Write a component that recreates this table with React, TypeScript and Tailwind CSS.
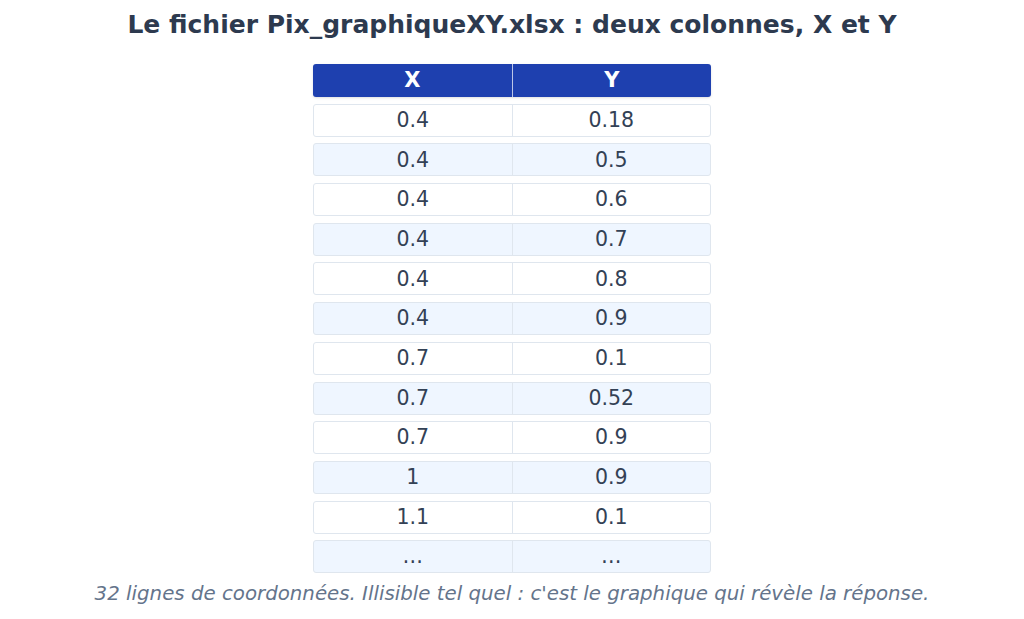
const rows: [string, string][] = [
  ["0.4", "0.18"],
  ["0.4", "0.5"],
  ["0.4", "0.6"],
  ["0.4", "0.7"],
  ["0.4", "0.8"],
  ["0.4", "0.9"],
  ["0.7", "0.1"],
  ["0.7", "0.52"],
  ["0.7", "0.9"],
  ["1", "0.9"],
  ["1.1", "0.1"],
  ["…", "…"],
];

export default function App() {
  return (
    <div
      className="w-[1024px] h-[619px] bg-white flex flex-col items-center text-[#334155]"
      style={{ fontFamily: '"DejaVu Sans", sans-serif' }}
    >
      <h1 className="mt-[10px] text-[25px] leading-[30px] font-bold text-[#2d3a4f]">
        Le fichier Pix_graphiqueXY.xlsx : deux colonnes, X et Y
      </h1>

      <div className="mt-[24px] w-[398px] flex flex-col gap-[6.7px]">
        {/* header */}
        <div className="h-[33px] flex rounded-[3px] bg-[#1e40af] text-white font-bold text-[21px] shadow-sm">
          <div className="flex-1 flex items-center justify-center border-r border-white/70">X</div>
          <div className="flex-1 flex items-center justify-center">Y</div>
        </div>

        {rows.map(([x, y], i) => (
          <div
            key={i}
            className={`h-[33px] flex rounded-[3px] border border-[#dfe6ee] text-[20.5px] ${
              i % 2 === 0 ? "bg-white" : "bg-[#eff6ff]"
            }`}
          >
            <div className="flex-1 flex items-center justify-center border-r border-[#dfe6ee]">{x}</div>
            <div className="flex-1 flex items-center justify-center">{y}</div>
          </div>
        ))}
      </div>

      <p className="mt-[9px] text-[19.8px] leading-[24px] italic text-[#64748b]">
        32 lignes de coordonnées. Illisible tel quel : c'est le graphique qui révèle la réponse.
      </p>
    </div>
  );
}
